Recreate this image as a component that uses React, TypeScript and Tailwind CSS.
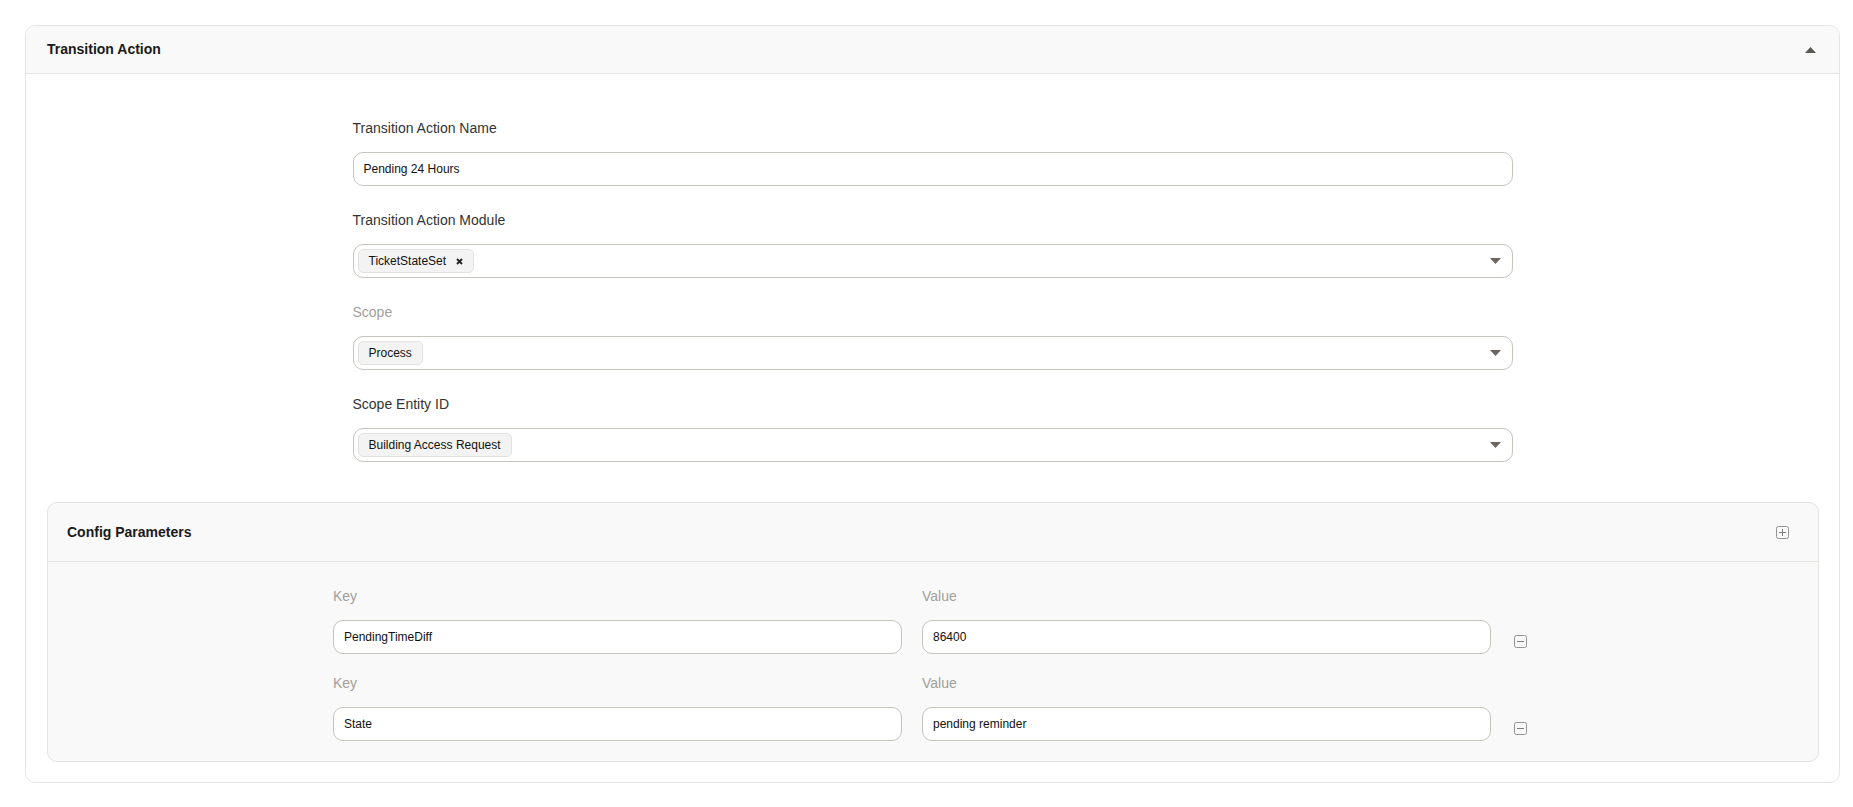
import type { ReactNode } from 'react'

const params = [
  { key: 'PendingTimeDiff', value: '86400' },
  { key: 'State', value: 'pending reminder' },
]

function CaretUp() {
  return (
    <svg width="11" height="6" viewBox="0 0 11 6">
      <polygon points="0,6 5.5,0 11,6" fill="#5c5752" />
    </svg>
  )
}

function CaretDown() {
  return (
    <svg width="11" height="6" viewBox="0 0 11 6">
      <polygon points="0,0 11,0 5.5,6" fill="#6b6561" />
    </svg>
  )
}

function SquareIcon({ plus }: { plus?: boolean }) {
  return (
    <svg width="13" height="13" viewBox="0 0 13 13">
      <rect x="0.5" y="0.5" width="12" height="12" rx="2" fill="none" stroke="#939393" />
      <line x1="3" y1="6.5" x2="10" y2="6.5" stroke="#7d7d7d" />
      {plus && <line x1="6.5" y1="3" x2="6.5" y2="10" stroke="#7d7d7d" />}
    </svg>
  )
}

function Chip({ label, removable }: { label: string; removable?: boolean }) {
  return (
    <span className="flex h-[24px] items-center gap-[10px] rounded-[5px] border border-[#e4e2df] bg-[#f3f3f3] px-[10px] text-[12px] text-[#111]">
      {label}
      {removable && (
        <svg width="7" height="7" viewBox="0 0 7 7">
          <path d="M1 1L6 6M6 1L1 6" stroke="#222" strokeWidth="1.8" />
        </svg>
      )}
    </span>
  )
}

function Field({ label, muted, children }: { label: string; muted?: boolean; children: ReactNode }) {
  return (
    <div className="flex flex-col">
      <label className={`mb-[14px] text-[14px] leading-5 ${muted ? 'text-[#a39e99]' : 'text-[#333]'}`}>
        {label}
      </label>
      {children}
    </div>
  )
}

function TextBox({ value }: { value: string }) {
  return (
    <div className="flex h-[34px] items-center rounded-[10px] border border-[#c7c3bd] bg-white pl-[10px] text-[12px] text-[#111]">
      {value}
    </div>
  )
}

function SelectBox({ children }: { children: ReactNode }) {
  return (
    <div className="flex h-[34px] items-center justify-between rounded-[10px] border border-[#c7c3bd] bg-white pl-[4px] pr-[11px]">
      <div className="flex items-center">{children}</div>
      <CaretDown />
    </div>
  )
}

export default function App() {
  return (
    <div className="min-h-screen bg-white pt-[25px] font-['Liberation_Sans',Arial,sans-serif]">
      <div className="ml-[25px] w-[1815px] overflow-hidden rounded-[10px] border border-[#e5e5e5]">
        {/* Header */}
        <div className="flex h-[48px] items-center justify-between border-b border-[#e5e5e5] bg-[#f9f9f9] pl-[21px] pr-[23px]">
          <h2 className="text-[14px] font-bold text-[#1a1a1a]">Transition Action</h2>
          <CaretUp />
        </div>

        <div className="px-5 pb-5 pt-[44px]">
          {/* Form */}
          <div className="mx-auto mb-10 flex w-[1160px] flex-col gap-6">
            <Field label="Transition Action Name">
              <TextBox value="Pending 24 Hours" />
            </Field>
            <Field label="Transition Action Module">
              <SelectBox>
                <Chip label="TicketStateSet" removable />
              </SelectBox>
            </Field>
            <Field label="Scope" muted>
              <SelectBox>
                <Chip label="Process" />
              </SelectBox>
            </Field>
            <Field label="Scope Entity ID">
              <SelectBox>
                <Chip label="Building Access Request" />
              </SelectBox>
            </Field>
          </div>

          {/* Config Parameters */}
          <div className="ml-px overflow-hidden rounded-[10px] border border-[#e5e3e0] bg-[#f9f9f9]">
            <div className="flex h-[59px] items-center justify-between border-b border-[#e5e3e0] pl-[19px] pr-[29px]">
              <h3 className="text-[14px] font-bold text-[#1a1a1a]">Config Parameters</h3>
              <SquareIcon plus />
            </div>
            <div className="flex flex-col gap-[19px] pb-5 pt-6">
              {params.map((p) => (
                <div key={p.key} className="mx-auto grid w-[1200px] grid-cols-[569px_569px_1fr] gap-x-5">
                  <Field label="Key" muted>
                    <TextBox value={p.key} />
                  </Field>
                  <Field label="Value" muted>
                    <TextBox value={p.value} />
                  </Field>
                  <div className="self-end pb-[6px] pl-[3px]">
                    <SquareIcon />
                  </div>
                </div>
              ))}
            </div>
          </div>
        </div>
      </div>
    </div>
  )
}
